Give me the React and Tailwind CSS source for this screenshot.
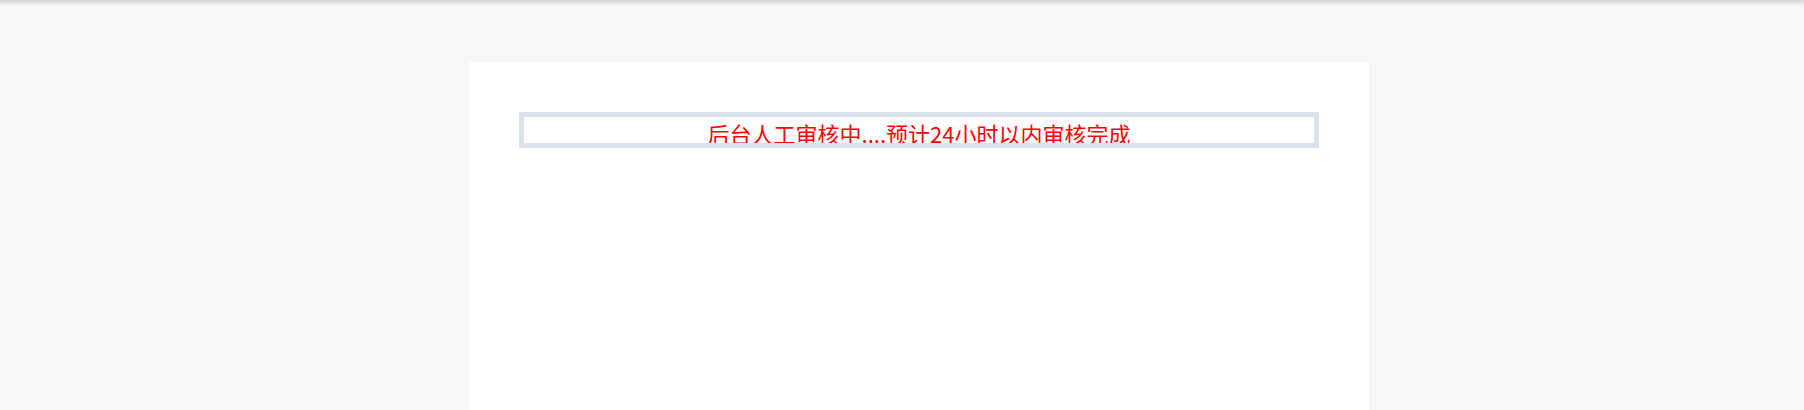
import React from 'react';

const App = () => {
  return (
    <div className="min-h-[410px] bg-[#f6f7f9] overflow-hidden" style={{ fontFamily: '"Noto Sans CJK SC", "Noto Sans", sans-serif' }}>
      <div className="h-0 shadow-[0_0_4px_2px_rgba(0,0,0,0.22)]" />
      <main className="pt-[62px]">
        <section className="ml-[469px] w-[900px] min-h-[348px] bg-white px-[50px] pt-[50px]">
          <div className="h-[36px] border-[5px] border-[#dae3ec] overflow-hidden text-center text-[22px] leading-normal text-[#ff0000]">
            后台人工审核中....预计24小时以内审核完成
          </div>
        </section>
      </main>
    </div>
  );
};

export default App;
